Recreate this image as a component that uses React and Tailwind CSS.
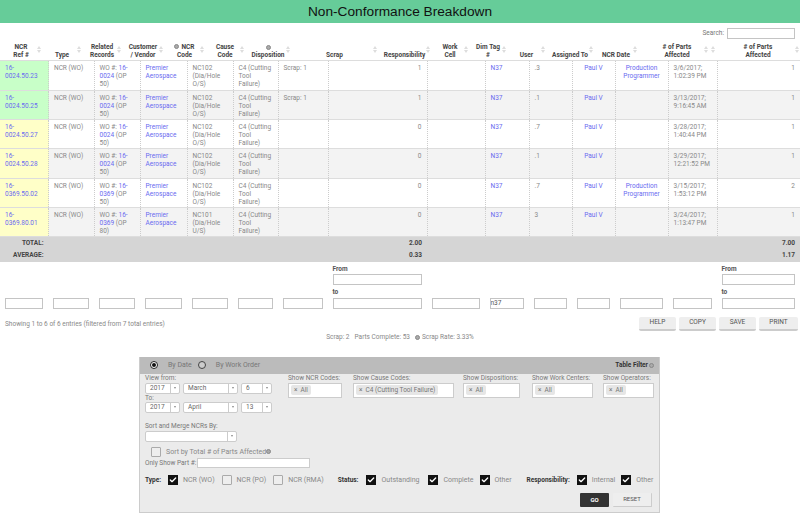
import { Check } from "lucide-react";

const HEAD = [
  { w: "w-[42px]", label: ["NCR", "Ref #"] },
  { w: "w-[40px]", label: ["Type"] },
  { w: "w-[40px]", label: ["Related", "Records"] },
  { w: "w-[42px]", label: ["Customer", "/ Vendor"] },
  { w: "w-[41px]", label: ["NCR", "Code"], dot: true },
  { w: "w-[40px]", label: ["Cause", "Code"] },
  { w: "w-[46px]", label: ["Disposition"], dotTop: true },
  { w: "w-[87px]", label: ["Scrap"] },
  { w: "w-[53px]", label: ["Responsibility"] },
  { w: "w-[38px]", label: ["Work", "Cell"] },
  { w: "w-[38px]", label: ["Dim Tag", "#"] },
  { w: "w-[39px]", label: ["User"] },
  { w: "w-[48px]", label: ["Assigned To"] },
  { w: "w-[44px]", label: ["NCR Date"] },
  { w: "w-[78px]", label: ["# of Parts", "Affected"], twoSort: true },
  { w: "w-[84px]", label: ["# of Parts", "Affected"] },
];

const COLS = [
  "w-[48.5px]",
  "w-[45.5px]",
  "w-[46px]",
  "w-[47px]",
  "w-[46px]",
  "w-[45px]",
  "w-[50px]",
  "w-[99px]",
  "w-[58px]",
  "w-[44px]",
  "w-[43px]",
  "w-[43px]",
  "w-[53px]",
  "w-[49px]",
  "w-[83px]",
];

const ROWS = [
  { ref: "0024.50.23", fill: "bg-[#c8ffc8]", wo: "0024", op: "50", code: "NC102", dia: "O/S", scrap: "Scrap: 1", resp: 1, user: ".3", assigned: true, date: ["3/6/2017;", "1:02:39 PM"], parts: 1 },
  { ref: "0024.50.25", fill: "bg-[#c8ffc8]", wo: "0024", op: "50", code: "NC102", dia: "O/S", scrap: "Scrap: 1", resp: 1, user: ".1", date: ["3/13/2017;", "9:16:45 AM"], parts: 1 },
  { ref: "0024.50.27", fill: "bg-[#ffffc8]", wo: "0024", op: "50", code: "NC102", dia: "O/S", resp: 0, user: ".7", date: ["3/28/2017;", "1:40:44 PM"], parts: 1 },
  { ref: "0024.50.28", fill: "bg-[#ffffc8]", wo: "0024", op: "50", code: "NC102", dia: "O/S", resp: 0, user: ".1", date: ["3/29/2017;", "12:21:52 PM"], parts: 1 },
  { ref: "0369.50.02", fill: "bg-[#ffffc8]", wo: "0369", op: "50", code: "NC102", dia: "O/S", resp: 0, user: ".7", assigned: true, date: ["3/15/2017;", "1:53:12 PM"], parts: 2 },
  { ref: "0369.80.01", fill: "bg-[#ffffc8]", wo: "0369", op: "80", code: "NC101", dia: "U/S", resp: 0, user: "3", date: ["3/24/2017;", "1:13:47 PM"], parts: 1 },
];

function Dot() {
  return <span className="inline-block w-[5px] h-[5px] rounded-full bg-[#aaa] border border-[#888]" />;
}

function SortArrows({ className }) {
  return (
    <span className={`absolute bottom-[7px] flex flex-col gap-[1px] ${className}`}>
      <span className="w-0 h-0 border-x-[2.5px] border-x-transparent border-b-[3px] border-b-[#ddd]" />
      <span className="w-0 h-0 border-x-[2.5px] border-x-transparent border-t-[3px] border-t-[#ddd]" />
    </span>
  );
}

function Header() {
  return (
    <div className="flex items-end h-[21px] border-b border-[#ddd] font-bold text-[#444]">
      {HEAD.map((h, i) => (
        <div key={i} className={`${h.w} relative shrink-0 text-center h-full flex flex-col justify-end pb-[1px]`}>
          {h.dotTop && (
            <div className="flex justify-center h-[8px] items-center">
              <Dot />
            </div>
          )}
          {h.label.map((line, j) => (
            <div key={j} className="whitespace-nowrap">
              {h.dot && j === 0 && (
                <span className="mr-[2px]">
                  <Dot />
                </span>
              )}
              {line}
            </div>
          ))}
          {h.twoSort && <SortArrows className="right-[8px]" />}
          <SortArrows className="right-[1px]" />
        </div>
      ))}
    </div>
  );
}

function BodyRow({ row, index }) {
  const even = index % 2 === 1;
  const td = "pl-[5px] pt-[3px] align-top border-r border-dotted border-[#ccc] whitespace-nowrap";
  const link = "text-[#6a6af0]";
  return (
    <tr className={`h-[29.25px] border-b border-[#ddd] ${even ? "bg-[#f3f3f3]" : "bg-white"}`}>
      <td className={`${td} ${row.fill} ${link}`}>16-<br />{row.ref}</td>
      <td className={td}>NCR (WO)</td>
      <td className={td}>
        WO #: <span className={link}>16-<br />{row.wo}</span> (OP<br />{row.op})
      </td>
      <td className={`${td} ${link}`}>Premier<br />Aerospace</td>
      <td className={td}>{row.code}<br />(Dia/Hole<br />{row.dia})</td>
      <td className={td}>C4 (Cutting<br />Tool<br />Failure)</td>
      <td className={td}>{row.scrap}</td>
      <td className={`${td} pr-[5px] text-right`}>{row.resp}</td>
      <td className={td}></td>
      <td className={`${td} ${link}`}>N37</td>
      <td className={td}>{row.user}</td>
      <td className={`${td} pr-[5px] ${link} text-center`}>Paul V</td>
      <td className={`${td} pr-[5px] ${link} text-center`}>
        {row.assigned && <>Production<br />Programmer</>}
      </td>
      <td className={td}>{row.date[0]}<br />{row.date[1]}</td>
      <td className={`${td} pr-[5px] text-right border-r-0`}>{row.parts}</td>
    </tr>
  );
}

function TextBox({ value }) {
  return (
    <input
      readOnly
      value={value || ""}
      className="block w-full h-[11px] bg-white border border-[#c4c4c4] text-[6.5px] text-[#555] underline decoration-wavy decoration-[#e88] outline-none px-0"
    />
  );
}

function RangeBox() {
  return (
    <div>
      <div className="font-bold text-[#555] h-[9px] leading-[8px]">From</div>
      <TextBox />
      <div className="font-bold text-[#555] h-[13px] leading-[15px]">to</div>
      <TextBox />
    </div>
  );
}

function Select({ w, children }) {
  return (
    <div className={`${w} h-[11px] flex items-center bg-white border border-[#ccc] rounded-[2px] text-[#666] leading-none`}>
      <span className="flex-1 pl-[4px]">{children}</span>
      <span className="w-[9px] h-full border-l border-[#ccc] flex items-center justify-center">
        <span className="w-0 h-0 border-x-[1.5px] border-x-transparent border-t-[2px] border-t-[#888]" />
      </span>
    </div>
  );
}

function Chips({ w, label, chip }) {
  return (
    <div className={`${w} shrink-0`}>
      <div className="whitespace-nowrap leading-[8px] mb-[1px]">{label}</div>
      <div className="h-[15px] bg-white border border-[#ccc] flex items-center px-[2px]">
        <span className="bg-[#e6e6e6] rounded-[2px] px-[3px] h-[10px] flex items-center whitespace-nowrap leading-none">
          <span className="mr-[3px] text-[#777]">×</span>
          {chip}
        </span>
      </div>
    </div>
  );
}

function Tick({ on, label, className }) {
  return (
    <span className={`flex items-center ${className || ""}`}>
      {on ? (
        <span className="w-[10px] h-[10px] bg-[#111] flex items-center justify-center shrink-0">
          <Check className="w-[8px] h-[8px] text-white" strokeWidth={4} />
        </span>
      ) : (
        <span className="w-[10px] h-[10px] bg-[#eee] border border-[#aaa] rounded-[1px] shrink-0" />
      )}
      <span className="ml-[5px] whitespace-nowrap text-[#888] text-[7px]">{label}</span>
    </span>
  );
}

function ActionButton({ w, children }) {
  return (
    <button className={`${w} h-[14px] bg-[#eee] rounded-[2px] border-b-2 border-[#ccc] text-[#555] text-[6.5px] leading-none`}>
      {children}
    </button>
  );
}

export default function App() {
  return (
    <div className="w-[800px] h-[517px] overflow-hidden bg-white text-[6.5px] leading-[8px] text-[#888] font-['Roboto',sans-serif]">
      {/* Title */}
      <div className="h-[23px] bg-[#66cc99] flex items-center justify-center text-[13.7px] text-[#111] font-['Liberation_Sans',sans-serif]">
        Non-Conformance Breakdown
      </div>

      {/* Search */}
      <div className="flex justify-end items-center gap-[3px] pr-[5px] pt-[3px] h-[17px]">
        <span className="text-[#777]">Search:</span>
        <input readOnly className="w-[68px] h-[11px] bg-white border border-[#c4c4c4]" />
      </div>

      <Header />

      {/* Body */}
      <table className="w-[800px] table-fixed border-collapse">
        <colgroup>
          {COLS.map((c, i) => (
            <col key={i} className={c} />
          ))}
        </colgroup>
        <tbody>
          {ROWS.map((r, i) => (
            <BodyRow key={r.ref} row={r} index={i} />
          ))}
          <tr className="h-[12.5px] bg-[#d5d5d5] font-bold text-[#444]">
            <td className="pr-[5px] text-right">TOTAL:</td>
            <td colSpan={6}></td>
            <td className="pr-[5px] text-right">2.00</td>
            <td colSpan={6}></td>
            <td className="pr-[5px] text-right">7.00</td>
          </tr>
          <tr className="h-[12.5px] bg-[#d5d5d5] font-bold text-[#444]">
            <td className="pr-[5px] text-right">AVERAGE:</td>
            <td colSpan={6}></td>
            <td className="pr-[5px] text-right">0.33</td>
            <td colSpan={6}></td>
            <td className="pr-[5px] text-right">1.17</td>
          </tr>
          <tr className="align-bottom">
            {COLS.map((c, i) => (
              <td key={i} className="pl-[4.5px] pr-[5.5px] pt-[3px]">
                {i === 7 || i === 14 ? <RangeBox /> : <TextBox value={i === 9 ? "n37" : ""} />}
              </td>
            ))}
          </tr>
        </tbody>
      </table>

      {/* Info and actions */}
      <div className="flex items-start justify-between pl-[5px] pr-[2px] pt-[8px] h-[21px]">
        <span className="text-[#888] pt-[3px]">Showing 1 to 6 of 6 entries (filtered from 7 total entries)</span>
        <div className="flex gap-[3px]">
          <ActionButton w="w-[37px]">HELP</ActionButton>
          <ActionButton w="w-[37px]">COPY</ActionButton>
          <ActionButton w="w-[37px]">SAVE</ActionButton>
          <ActionButton w="w-[39px]">PRINT</ActionButton>
        </div>
      </div>
      <div className="flex justify-center items-center gap-[5px] h-[12px] pt-[3px]">
        <span>Scrap: 2</span>
        <span>Parts Complete: 53</span>
        <span className="flex items-center gap-[2px]"><Dot /> Scrap Rate: 3.33%</span>
      </div>

      {/* Table filter */}
      <div className="ml-[139px] mt-[15px] w-[521px] h-[156px] bg-[#ebebeb] border-b border-x border-[#ccc] text-[#777]">
        <div className="h-[17px] bg-[#bbb] flex items-center pl-[10px] pr-[5px] text-[7px]">
          <span className="w-[8px] h-[8px] rounded-full border border-[#222] flex items-center justify-center bg-white">
            <span className="w-[4px] h-[4px] rounded-full bg-[#111]" />
          </span>
          <span className="ml-[10px] text-[#777]">By Date</span>
          <span className="ml-[6px] w-[8px] h-[8px] rounded-full border border-[#444] bg-[#ccc]" />
          <span className="ml-[10px] text-[#777]">By Work Order</span>
          <span className="ml-auto font-bold text-[6.5px] text-[#333] flex items-center gap-[1px]">Table Filter <Dot /></span>
        </div>

        <div className="flex pl-[5px]">
          <div className="w-[143px] shrink-0">
            <div>View from:</div>
            <div className="flex gap-[3px] mt-[1px]">
              <Select w="w-[35px]">2017</Select>
              <Select w="w-[55px]">March</Select>
              <Select w="w-[31px]">6</Select>
            </div>
            <div>To:</div>
            <div className="flex gap-[3px]">
              <Select w="w-[35px]">2017</Select>
              <Select w="w-[55px]">April</Select>
              <Select w="w-[31px]">13</Select>
            </div>
            <div className="mt-[9px]">Sort and Merge NCRs By:</div>
            <div className="mt-[1px]">
              <Select w="w-[92px]" />
            </div>
          </div>
          <Chips w="w-[54px] mr-[11px]" label="Show NCR Codes:" chip="All" />
          <Chips w="w-[101px] mr-[9px]" label="Show Cause Codes:" chip="C4 (Cutting Tool Failure)" />
          <Chips w="w-[57px] mr-[12px]" label="Show Dispositions:" chip="All" />
          <Chips w="w-[61px] mr-[10px]" label="Show Work Centers:" chip="All" />
          <Chips w="w-[51px]" label="Show Operators:" chip="All" />
        </div>

        <div className="pl-[11px] mt-[5px] flex items-center">
          <Tick label="Sort by Total # of Parts Affected" />
          <Dot />
        </div>
        <div className="pl-[5px] flex items-center gap-[1px] mt-[1px]">
          <span>Only Show Part #:</span>
          <input readOnly className="w-[113px] h-[10px] bg-white border border-[#ccc]" />
        </div>
        <div className="pl-[5px] flex items-center mt-[7px]">
          <span className="font-bold text-[#333] mr-[7px]">Type:</span>
          <Tick on label="NCR (WO)" />
          <Tick label="NCR (PO)" className="ml-[7px]" />
          <Tick label="NCR (RMA)" className="ml-[7px]" />
          <span className="font-bold text-[#333] ml-[14px] mr-[8px]">Status:</span>
          <Tick on label="Outstanding" />
          <Tick on label="Complete" className="ml-[9px]" />
          <Tick on label="Other" className="ml-[6px]" />
          <span className="font-bold text-[#333] ml-[15px] mr-[7px]">Responsibility:</span>
          <Tick on label="Internal" />
          <Tick on label="Other" className="ml-[6px]" />
        </div>
        <div className="flex justify-end gap-[4px] pr-[7px] mt-[8px]">
          <button className="w-[29px] h-[14px] bg-[#333] text-white font-bold text-[6px] leading-none rounded-[1px]">GO</button>
          <button className="w-[39px] h-[14px] bg-[#eee] text-[#555] text-[6px] leading-none rounded-[1px] border-b border-r border-[#ccc]">RESET</button>
        </div>
      </div>
    </div>
  );
}
